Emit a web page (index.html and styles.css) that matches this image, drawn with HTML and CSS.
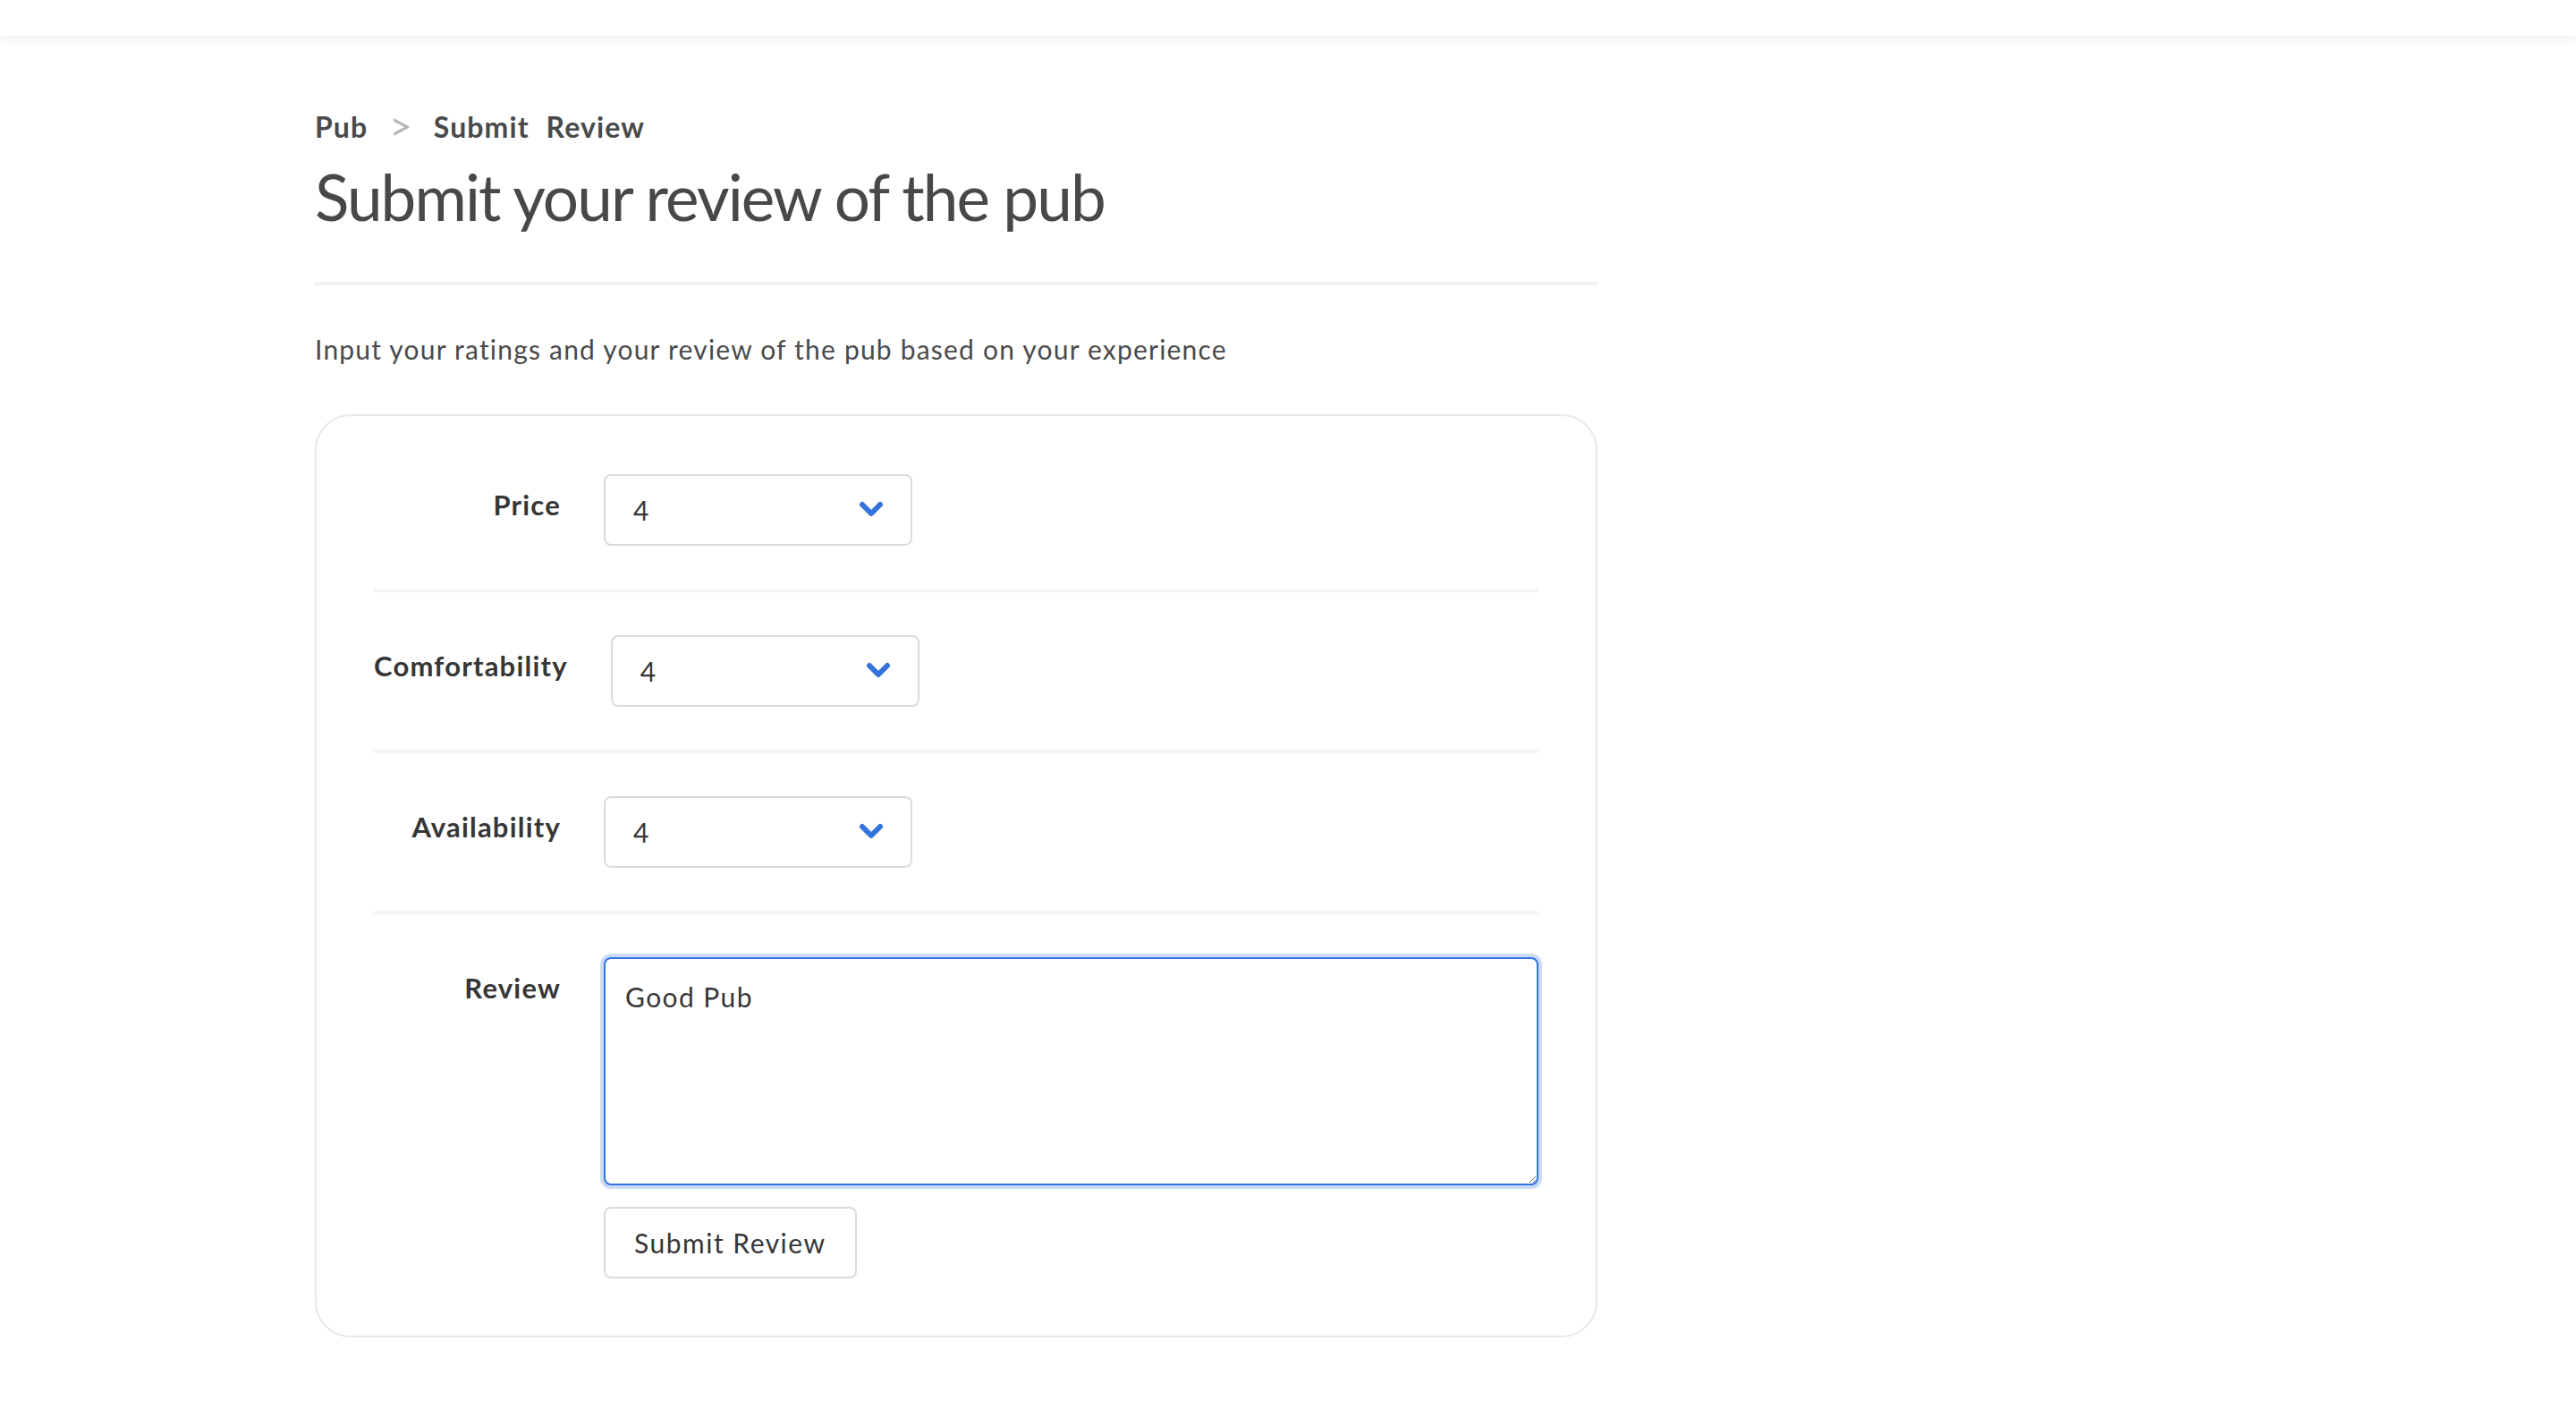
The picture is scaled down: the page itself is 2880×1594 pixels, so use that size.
FILE: index.html
```html
<!DOCTYPE html>
<html lang="en">
<head>
<meta charset="utf-8">
<title>Submit your review of the pub</title>
<link rel="stylesheet" href="styles.css">
</head>
<body>
<header class="topbar"></header>
<main class="page">
  <nav class="crumbs">
    <span class="crumb">Pub</span>
    <span class="sep">&gt;</span>
    <span class="crumb crumb-wide">Submit Review</span>
  </nav>
  <h1 class="title">Submit your review of the pub</h1>
  <hr class="rule">
  <p class="intro">Input your ratings and your review of the pub based on your experience</p>
  <form class="box">
    <div class="field">
      <div class="field-label">Price</div>
      <div class="field-body">
        <div class="select"><span>4</span><svg class="chev" width="28" height="18" viewBox="0 0 28 18"><polyline points="4,4 14,14 24,4" fill="none" stroke="#3273dc" stroke-width="6" stroke-linecap="round" stroke-linejoin="round"/></svg></div>
      </div>
    </div>
    <hr class="divider">
    <div class="field">
      <div class="field-label">Comfortability</div>
      <div class="field-body">
        <div class="select"><span>4</span><svg class="chev" width="28" height="18" viewBox="0 0 28 18"><polyline points="4,4 14,14 24,4" fill="none" stroke="#3273dc" stroke-width="6" stroke-linecap="round" stroke-linejoin="round"/></svg></div>
      </div>
    </div>
    <hr class="divider">
    <div class="field">
      <div class="field-label">Availability</div>
      <div class="field-body">
        <div class="select"><span>4</span><svg class="chev" width="28" height="18" viewBox="0 0 28 18"><polyline points="4,4 14,14 24,4" fill="none" stroke="#3273dc" stroke-width="6" stroke-linecap="round" stroke-linejoin="round"/></svg></div>
      </div>
    </div>
    <hr class="divider">
    <div class="field">
      <div class="field-label">Review</div>
      <div class="field-body column">
        <textarea class="textarea">Good Pub</textarea>
        <button type="button" class="button">Submit Review</button>
      </div>
    </div>
  </form>
</main>
</body>
</html>
```
FILE: styles.css
```css
html, body {
  margin: 0;
  padding: 0;
  background: #ffffff;
}
body {
  font-family: "Lato", "Noto Sans", sans-serif;
  color: #4a4a4a;
}
.topbar {
  height: 40px;
  background: #ffffff;
  box-shadow: 0 3px 12px rgba(0, 0, 0, 0.07);
}
.page {
  width: 1434px;
  margin-left: 352px;
  padding-top: 79px;
}
.crumbs {
  display: flex;
  align-items: center;
  gap: 24px;
  height: 45px;
  font-size: 32px;
  letter-spacing: 1.1px;
  font-weight: 700;
  color: #4a4a4a;
}
.crumb-wide {
  word-spacing: 10px;
}
.sep {
  color: #b5b5b5;
  font-weight: 400;
  font-size: 44px;
  letter-spacing: 0;
  margin-top: -4px;
}
.title {
  margin: 13px 0 0 0;
  font-size: 71px;
  line-height: 85px;
  letter-spacing: -1.9px;
  font-weight: 400;
  color: #484848;
}
.rule {
  margin: 53px 0 0 0;
  border: 0;
  height: 4px;
  background: #f2f2f2;
}
.intro {
  margin: 49px 0 0 0;
  font-size: 30px;
  line-height: 45px;
  letter-spacing: 1.2px;
  color: #4a4a4a;
}
.box {
  margin-top: 50px;
  border: 2px solid #e8e8e8;
  border-radius: 40px;
  padding: 65px 64px 64px 64px;
}
.field {
  display: flex;
  align-items: flex-start;
}
.field-label {
  flex: 1 1 0;
  margin-right: 48px;
  text-align: right;
  font-size: 31px;
  line-height: 46px;
  letter-spacing: 1.2px;
  font-weight: 700;
  color: #363636;
  padding-top: 11px;
  white-space: nowrap;
}
.field-body {
  flex: 5 1 0;
  display: flex;
}
.field-body.column {
  flex-direction: column;
  align-items: flex-start;
}
.select {
  box-sizing: border-box;
  width: 345px;
  height: 80px;
  border: 2px solid #dbdbdb;
  border-radius: 8px;
  display: flex;
  align-items: center;
  justify-content: space-between;
  padding: 0 30px 0 31px;
  font-size: 30px;
  color: #363636;
}
.chev {
  display: block;
  margin-top: -2px;
}
.divider {
  margin: 48px 0;
  border: 0;
  height: 4px;
  background: #f5f5f5;
}
.textarea {
  box-sizing: border-box;
  display: block;
  width: 100%;
  height: 255px;
  border: 2px solid #3273dc;
  border-radius: 8px;
  box-shadow: 0 0 0 4px rgba(50, 115, 220, 0.25);
  padding: 20px 22px;
  font-family: "Lato", "Noto Sans", sans-serif;
  font-size: 30px;
  line-height: 45px;
  letter-spacing: 1.4px;
  color: #363636;
  outline: none;
  resize: vertical;
  margin: 0;
}
.button {
  margin-top: 24px;
  box-sizing: border-box;
  height: 80px;
  padding: 0 32px;
  border: 2px solid #dbdbdb;
  border-radius: 8px;
  background: #ffffff;
  font-family: "Lato", "Noto Sans", sans-serif;
  font-size: 30px;
  letter-spacing: 1.5px;
  color: #363636;
}
```
